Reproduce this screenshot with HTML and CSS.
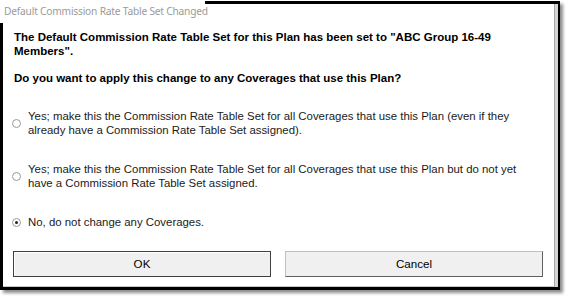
FILE: index.html
```html
<!DOCTYPE html>
<html>
<head>
<meta charset="utf-8">
<link rel="stylesheet" href="styles.css">
</head>
<body>
<div class="frame">
  <div class="title">Default Commission Rate Table Set Changed</div>
  <div class="window">
    <p class="msg">The Default Commission Rate Table Set for this Plan has been set to "ABC Group 16-49<br>Members".</p>
    <p class="msg question">Do you want to apply this change to any Coverages that use this Plan?</p>
    <div class="options">
      <div class="opt"><span class="radio"></span><span class="label">Yes; make this the Commission Rate Table Set for all Coverages that use this Plan (even if they<br>already have a Commission Rate Table Set assigned).</span></div>
      <div class="opt"><span class="radio"></span><span class="label">Yes; make this the Commission Rate Table Set for all Coverages that use this Plan but do not yet<br>have a Commission Rate Table Set assigned.</span></div>
      <div class="opt"><span class="radio checked"></span><span class="label">No, do not change any Coverages.</span></div>
    </div>
    <div class="buttons">
      <div class="btn btn-default">OK</div>
      <div class="btn">Cancel</div>
    </div>
  </div>
</div>
</body>
</html>
```
FILE: styles.css
```css
html, body {
  margin: 0;
  padding: 0;
  background: #ffffff;
}
body {
  width: 566px;
  height: 297px;
  overflow: hidden;
  font-family: "Liberation Sans", Arial, sans-serif;
  color: #000;
}
.frame {
  position: relative;
  margin-top: 1px;
  width: 554px;
  height: 283px;
  border: 3px solid #000;
  box-shadow: 3px 3px 3px rgba(0,0,0,0.45);
}
.title {
  position: absolute;
  left: -3px;
  top: -4px;
  width: 205px;
  height: 23px;
  background: #fff;
  color: #9a9a9a;
  font-family: "Noto Sans", "Open Sans", sans-serif;
  font-size: 10.2px;
  letter-spacing: -0.2px;
  line-height: 22px;
  padding-left: 4px;
  box-sizing: border-box;
  white-space: nowrap;
}
.window {
  height: 100%;
  box-sizing: border-box;
  padding: 26px 10px 0 11px;
  border-right: 1px solid #a8a8a8;
  border-bottom: 1px solid #c8c8c8;
  margin-right: 2px;
  box-shadow: 3px 0 0 #d4d4d4;
}
.msg {
  margin: 0;
  font-weight: bold;
  font-size: 11.5px;
  line-height: 14px;
}
.question {
  margin-top: 13px;
}
.options {
  display: flex;
  flex-direction: column;
  gap: 25px;
  margin-top: 24px;
  margin-left: -2px;
}
.opt {
  display: flex;
  align-items: center;
  gap: 7px;
  font-size: 11.4px;
  line-height: 14px;
}
.radio {
  flex: none;
  width: 9px;
  height: 9px;
  border-radius: 50%;
  border: 1px solid #9a9a9a;
  box-sizing: border-box;
  background: #fff;
  position: relative;
}
.radio.checked::after {
  content: "";
  position: absolute;
  left: 2px;
  top: 2px;
  width: 3px;
  height: 3px;
  border-radius: 50%;
  background: #222;
}
.label {
  color: #1a1a1a;
}
.buttons {
  display: flex;
  gap: 14px;
  margin-top: 22px;
  margin-left: -1px;
}
.btn {
  width: 258px;
  height: 26px;
  box-sizing: border-box;
  background: #f0f0f0;
  border: 1px solid #c0c0c0;
  border-right-color: #606060;
  border-bottom-color: #606060;
  font-size: 11.6px;
  line-height: 24px;
  text-align: center;
}
.btn-default {
  border: 1px solid #404040;
  box-shadow: inset 1px 1px 0 #fff;
}
```
